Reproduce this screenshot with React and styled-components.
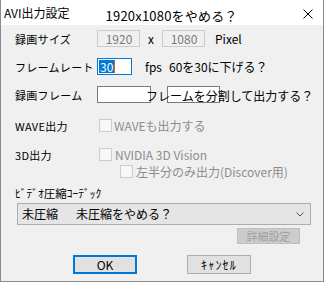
import React from "react";
import styled, { createGlobalStyle } from "styled-components";

const Global = createGlobalStyle`
  html, body { margin: 0; padding: 0; background: #f0f0f0; }
  body { font-family: "Noto Sans CJK JP", "Noto Sans", sans-serif; }
  * { box-sizing: border-box; }
`;

const Window = styled.div`
  width: 324px;
  height: 282px;
  background: #f0f0f0;
  border: 1px solid #8c8c8c;
  border-top: none;
  display: flex;
  flex-direction: column;
  overflow: hidden;
`;

const TitleBar = styled.div`
  height: 25px;
  background: #ffffff;
  display: flex;
  align-items: flex-start;
  flex-shrink: 0;
`;

const TitleText = styled.span`
  font-size: 12px;
  line-height: 14px;
  color: #000;
  margin-top: 6px;
  margin-left: 3px;
  white-space: nowrap;
`;

const TitleNote = styled.span`
  font-size: 13px;
  line-height: 16px;
  color: #000;
  margin-top: 8px;
  margin-left: 36px;
  letter-spacing: 0.2px;
  white-space: nowrap;
`;

const CloseBtn = styled.div`
  margin-left: auto;
  margin-right: 10px;
  margin-top: 9px;
  width: 10px;
  height: 10px;
  display: flex;
`;

const Body = styled.div`
  display: flex;
  flex-direction: column;
  padding-left: 14px;
`;

const Row = styled.div`
  display: flex;
  align-items: center;
  height: ${(p) => p.$h || 17}px;
  margin-top: ${(p) => p.$mt || 0}px;
  position: relative;
`;

const Label = styled.span`
  width: 82px;
  flex-shrink: 0;
  font-size: 11px;
  letter-spacing: 0.3px;
  line-height: 14px;
  color: #000;
  white-space: nowrap;
`;

const HalfLabel = styled.span`
  font-size: 11.5px;
  line-height: 14px;
  color: #000;
  white-space: nowrap;
`;

const TextBox = styled.div`
  width: ${(p) => p.$w}px;
  height: 17px;
  margin-left: ${(p) => p.$ml || 0}px;
  flex-shrink: 0;
  border: 1px solid ${(p) => (p.$focus ? "#0078d7" : p.$disabled ? "#cccccc" : "#7a7a7a")};
  background: ${(p) => (p.$disabled ? "#f0f0f0" : "#ffffff")};
  color: #7a7a7a;
  font-size: 12px;
  line-height: 15px;
  display: flex;
  align-items: center;
  justify-content: ${(p) => (p.$center ? "center" : "flex-start")};
  padding-left: 1px;
`;

const Selected = styled.span`
  background: #0078d7;
  color: #fff;
  font-size: 12px;
  line-height: 13px;
  padding: 0 1px;
  border-right: 1px solid #e06000;
`;

const Text = styled.span`
  font-size: ${(p) => p.$fs || 12}px;
  line-height: 14px;
  color: ${(p) => (p.$disabled ? "#8d8d8d" : "#000")};
  margin-left: ${(p) => p.$ml || 0}px;
  white-space: nowrap;
  text-align: ${(p) => (p.$center ? "center" : "left")};
  width: ${(p) => (p.$w ? `${p.$w}px` : "auto")};
`;

const Overlay = styled.span`
  position: absolute;
  left: 131px;
  top: 2px;
  font-size: 12px;
  line-height: 16px;
  color: #000;
  white-space: nowrap;
`;

const Check = styled.span`
  width: 13px;
  height: 13px;
  border: 1px solid #cccccc;
  background: #f7f7f7;
  flex-shrink: 0;
  margin-left: ${(p) => p.$ml || 0}px;
`;

const Select = styled.div`
  width: 294px;
  height: 22px;
  margin-left: 2px;
  border: 1px solid #adadad;
  background: #e5e5e5;
  display: flex;
  align-items: center;
  padding-left: 4px;
  padding-right: 6px;
  color: #000;
`;

const SelectValue = styled.span`
  width: 54px;
  font-size: 12px;
  line-height: 16px;
  white-space: nowrap;
`;

const SelectNote = styled.span`
  font-size: 12px;
  line-height: 16px;
  white-space: nowrap;
`;

const Chevron = styled.svg`
  margin-left: auto;
`;

const SmallButton = styled.div`
  width: 63px;
  height: 16px;
  margin-left: 222px;
  background: #cccccc;
  border: 1px solid #bfbfbf;
  color: #a0a0a0;
  font-size: 11px;
  line-height: 14px;
  display: flex;
  align-items: center;
  justify-content: center;
`;

const ButtonRow = styled.div`
  display: flex;
  justify-content: center;
  gap: 50px;
  margin-top: 11px;
  margin-left: -14px;
`;

const Button = styled.div`
  width: 64px;
  height: 19px;
  background: #e1e1e1;
  border: ${(p) => (p.$default ? "2px solid #0078d7" : "1px solid #adadad")};
  font-size: 12px;
  line-height: 14px;
  color: #000;
  display: flex;
  align-items: center;
  justify-content: center;
  letter-spacing: ${(p) => (p.$spaced ? "1.2px" : "0")};
  white-space: nowrap;
`;

export default function App() {
  return (
    <>
      <Global />
      <Window>
        <TitleBar>
          <TitleText>AVI出力設定</TitleText>
          <TitleNote>1920x1080をやめる？</TitleNote>
          <CloseBtn>
            <svg width="10" height="10" viewBox="0 0 10 10">
              <path d="M0.5 0.5 L9.5 9.5 M9.5 0.5 L0.5 9.5" stroke="#000" strokeWidth="1" fill="none" />
            </svg>
          </CloseBtn>
        </TitleBar>
        <Body>
          <Row $mt={5}>
            <Label>録画サイズ</Label>
            <TextBox $w={43} $disabled $center>1920</TextBox>
            <Text $w={22} $center>x</Text>
            <TextBox $w={43} $disabled $center>1080</TextBox>
            <Text $ml={10}>Pixel</Text>
          </Row>
          <Row $mt={11}>
            <Label>フレームレート</Label>
            <TextBox $w={35} $focus>
              <Selected>30</Selected>
            </TextBox>
            <Text $ml={13}>fps</Text>
            <Text $ml={7}>60を30に下げる？</Text>
          </Row>
          <Row $mt={11}>
            <Label>録画フレーム</Label>
            <TextBox $w={54} />
            <TextBox $w={53} $ml={16} />
            <Overlay>フレームを分割して出力する？</Overlay>
          </Row>
          <Row $mt={16} $h={13}>
            <Label>WAVE出力</Label>
            <Check $ml={2} />
            <Text $ml={2} $disabled>WAVEも出力する</Text>
          </Row>
          <Row $mt={16} $h={13}>
            <Label>3D出力</Label>
            <Check $ml={2} />
            <Text $ml={3} $disabled>NVIDIA 3D Vision</Text>
          </Row>
          <Row $mt={4} $h={13}>
            <Label />
            <Check $ml={23} />
            <Text $ml={3} $disabled>左半分のみ出力(Discover用)</Text>
          </Row>
          <Row $mt={8} $h={14}>
            <HalfLabel>ﾋﾞﾃﾞｵ圧縮ｺｰﾃﾞｯｸ</HalfLabel>
          </Row>
          <Row $mt={3} $h={22}>
            <Select>
              <SelectValue>未圧縮</SelectValue>
              <SelectNote>未圧縮をやめる？</SelectNote>
              <Chevron width="8" height="5" viewBox="0 0 8 5">
                <path d="M0.5 0.5 L4 4 L7.5 0.5" stroke="#555" strokeWidth="1" fill="none" />
              </Chevron>
            </Select>
          </Row>
          <Row $mt={3} $h={16}>
            <SmallButton>詳細設定</SmallButton>
          </Row>
          <ButtonRow>
            <Button $default>OK</Button>
            <Button $spaced>ｷｬﾝｾﾙ</Button>
          </ButtonRow>
        </Body>
      </Window>
    </>
  );
}
